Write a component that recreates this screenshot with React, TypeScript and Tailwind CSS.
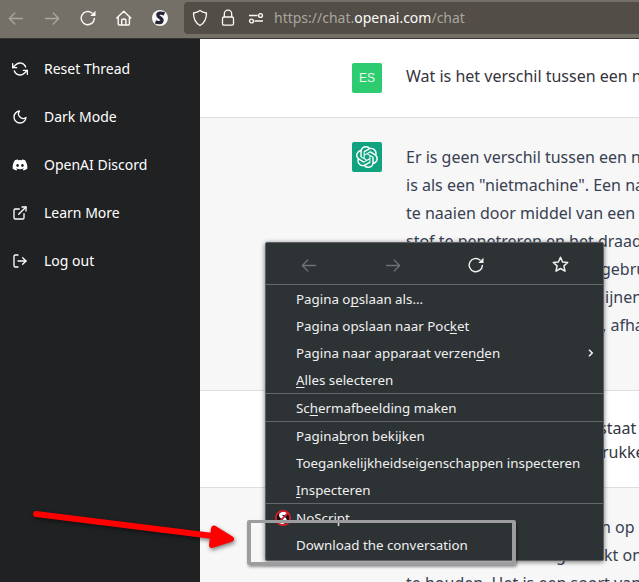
import React from "react";
import { FiRefreshCcw, FiMoon, FiExternalLink, FiLogOut } from "react-icons/fi";
import { FaDiscord } from "react-icons/fa";
import { SiOpenai } from "react-icons/si";

function Arrow({ back = false, className = "" }: { back?: boolean; className?: string }) {
  return (
    <svg width="16" height="16" viewBox="0 0 16 16" fill="none" stroke="currentColor" strokeWidth="1.3" strokeLinecap="round" strokeLinejoin="round" className={className}>
      <path d={back ? "M14.5 8.5H1.5M6.8 3L1.3 8.5L6.8 14" : "M1.5 8.5H14.5M9.2 3L14.7 8.5L9.2 14"} />
    </svg>
  );
}

function Reload() {
  return (
    <svg width="16" height="16" viewBox="0 0 16 16" fill="none" stroke="currentColor" strokeWidth="1.4" strokeLinecap="round">
      <path d="M14.4 8.4A6.6 6.6 0 1 1 12 3" />
      <path d="M15.5 0.7V6H10.2Z" fill="currentColor" stroke="none" />
    </svg>
  );
}

function Star() {
  return (
    <svg width="17" height="17" viewBox="0 0 17 17" fill="none" stroke="currentColor" strokeWidth="1.5" strokeLinejoin="round">
      <path d="M8.5 1.3L10.6 6L15.7 6.5L11.9 9.9L13 15.2L8.5 12.5L4 15.2L5.1 9.9L1.3 6.5L6.4 6Z" />
    </svg>
  );
}

function Toolbar() {
  return (
    <header className="flex h-[39px] shrink-0 items-start border-b border-[#38352f] bg-[#757067] text-[#fbfbfa]">
      <div className="flex h-9 w-[184px] shrink-0 items-center gap-5 pl-2">
        <Arrow back className="text-[#aaa69f]" />
        <Arrow className="text-[#aaa69f]" />
        <Reload />
        <svg width="16" height="16" viewBox="0 0 16 16" fill="none" stroke="currentColor" strokeWidth="1.4" strokeLinecap="round" strokeLinejoin="round">
          <path d="M0.8 8L7.8 1.3L14.8 8M2.2 7V14Q2.2 15 3.2 15H12.4Q13.4 15 13.4 14V7M5.7 15V10.5Q5.7 9 7.8 9Q9.9 9 9.9 10.5V15" />
        </svg>
        <svg width="16" height="16" viewBox="0 0 16 16">
          <circle cx="8" cy="8" r="8" fill="#f8f8f8" />
          <path d="M12.4 3.9C9 2.5 6 3 5.8 5C5.6 7.4 10.4 7.8 10 10.4C9.6 13 6.3 13 3.4 11.9" fill="none" stroke="#27233b" strokeWidth="3.4" />
        </svg>
      </div>
      <div className="mt-[2px] flex h-8 flex-1 items-center rounded-l-[4px] bg-[#524d46] pl-2">
        <svg width="16" height="18" viewBox="0 0 16 18" fill="none" stroke="currentColor" strokeWidth="1.3" strokeLinejoin="round">
          <path d="M8 1.5C10 3.2 12.3 3.8 14.5 4C14.5 9.7 12.6 14 8 16.5C3.4 14 1.5 9.7 1.5 4C3.7 3.8 6 3.2 8 1.5Z" />
        </svg>
        <svg className="ml-3" width="16" height="18" viewBox="0 0 16 18" fill="none" stroke="currentColor" strokeWidth="1.3">
          <path d="M4.3 8V4.8A3.7 3.7 0 0 1 11.7 4.8V8" />
          <rect x="2.5" y="8" width="11" height="8.2" rx="1.4" />
        </svg>
        <svg className="ml-3" width="16" height="16" viewBox="0 0 16 16" fill="none" stroke="currentColor" strokeWidth="1.4">
          <path d="M1 5.5H9.5M6.5 11H15" />
          <circle cx="12.5" cy="5.5" r="1.9" />
          <circle cx="3.5" cy="11" r="1.9" />
        </svg>
        <span className="ml-[10px] text-[14px] leading-5 whitespace-nowrap text-[#aaa69f]">
          https://chat.<span className="text-[#fbfbfa]">openai.com</span>/chat
        </span>
      </div>
    </header>
  );
}

const links = [
  { label: "Reset Thread", Icon: FiRefreshCcw },
  { label: "Dark Mode", Icon: FiMoon },
  { label: "OpenAI Discord", Icon: FaDiscord },
  { label: "Learn More", Icon: FiExternalLink },
  { label: "Log out", Icon: FiLogOut },
];

function Sidebar() {
  return (
    <nav className="flex w-[200px] shrink-0 flex-col bg-[#202123] pt-[6px] text-sm text-white">
      {links.map(({ label, Icon }) => (
        <a key={label} className="flex h-12 items-center gap-4 pl-3">
          <Icon size={16} />
          {label}
        </a>
      ))}
    </nav>
  );
}

function Chat() {
  return (
    <main className="flex min-w-0 flex-1 flex-col overflow-hidden bg-[#f7f7f8] text-base text-[#374151]">
      <section className="flex h-[79px] shrink-0 gap-6 border-b border-[#dedee1] bg-white pt-6 pl-[152px] text-[#343541]">
        <div className="flex size-[30px] shrink-0 items-center justify-center rounded-xs bg-[#2dcc70] font-['Liberation_Sans',sans-serif] text-[12px] text-white/90">ES</div>
        <p className="leading-[26px] whitespace-nowrap">Wat is het verschil tussen een n</p>
      </section>
      <section className="flex h-[273px] shrink-0 border-b border-[#dedee1] pt-6 pl-[152px]">
        <div className="flex size-[30px] shrink-0 items-center justify-center rounded-xs bg-[#10a37f] text-white">
          <SiOpenai size={22} />
        </div>
        <div className="w-0 pt-px leading-7 whitespace-nowrap">
          <p className="pl-6">Er is geen verschil tussen een n</p>
          <p className="pl-6">is als een "nietmachine". Een na</p>
          <p className="pl-6">te naaien door middel van een</p>
          <p className="pl-6">stof te penetreren en het draad</p>
          <p className="pl-[219px]">gebru</p>
          <p className="pl-[223px]">ijnen</p>
          <p className="pl-[220px]">, afha</p>
        </div>
      </section>
      <section className="h-[97px] shrink-0 border-b border-[#dedee1] bg-white pt-[25px] pl-[399px] leading-6 text-[#343541]">
        <p className="whitespace-nowrap">staat</p>
        <p className="pl-[3px] whitespace-nowrap">rukke</p>
      </section>
      <section className="pt-[25px] pl-[206px] leading-7">
        <p className="pl-[195px] whitespace-nowrap">n op</p>
        <p className="flex whitespace-nowrap">
          <span className="w-[198px] shrink-0 pl-[150px]">g</span>kt on
        </p>
        <p className="whitespace-nowrap">te houden. Het is een soort van</p>
      </section>
    </main>
  );
}

const groups: { before: string; key?: string; after?: string; arrow?: boolean; logo?: boolean }[][] = [
  [
    { before: "Pagina o", key: "p", after: "slaan als..." },
    { before: "Pagina opslaan naar Poc", key: "k", after: "et" },
    { before: "Pagina naar apparaat verzen", key: "d", after: "en", arrow: true },
    { before: "", key: "A", after: "lles selecteren" },
  ],
  [{ before: "Sc", key: "h", after: "ermafbeelding maken" }],
  [
    { before: "Pagina", key: "b", after: "ron bekijken" },
    { before: "Toegankelijkheidseigenschappen inspecteren" },
    { before: "", key: "I", after: "nspecteren" },
  ],
  [{ before: "NoScript", logo: true }, { before: "Download the conversation" }],
];

function NoScriptIcon() {
  return (
    <svg width="16" height="16" viewBox="0 0 16 16">
      <circle cx="8" cy="8" r="7" fill="#111" />
      <path d="M12 4.3C8.6 2.6 5.4 3.4 5.6 5.6C5.8 7.8 10.2 7.7 10.2 10C10.2 12.4 7 12.9 4 11.5" fill="none" stroke="white" strokeWidth="3.2" />
      <circle cx="8" cy="8" r="7.1" fill="none" stroke="#db1f2c" strokeWidth="1.8" />
      <path d="M12.8 3.2L3.2 12.8" stroke="#db1f2c" strokeWidth="1.8" />
    </svg>
  );
}

function ContextMenu() {
  return (
    <div className="absolute top-[242px] left-[265px] h-[319px] w-[339px] rounded-[2px] border border-[#5d6165] bg-[#2d3235] text-[13.33px] text-[#f0f0f0] shadow-[0_1px_5px_rgba(0,0,0,0.55)]">
      <div className="flex h-[41px] items-center justify-around pt-[2px] pl-px">
        <Arrow back className="text-[#6e7175]" />
        <Arrow className="text-[#6e7175]" />
        <Reload />
        <Star />
      </div>
      {groups.map((items, i) => (
        <div key={i} className="border-t border-[#65686b]">
          {items.map((item) => (
            <div key={item.before + item.after} className="flex h-[27px] items-center whitespace-nowrap">
              <span className="w-[30px] shrink-0 pl-[9px]">{item.logo && <NoScriptIcon />}</span>
              <span className="flex-1 pt-[2px] whitespace-pre">
                {item.before}
                <span className="underline decoration-1 underline-offset-2 [text-decoration-skip-ink:none]">{item.key}</span>
                {item.after}
              </span>
              {item.arrow && (
                <svg className="mr-[8px]" width="8" height="8" viewBox="0 0 8 8" fill="none" stroke="currentColor" strokeWidth="1.6">
                  <path d="M2 0.8L5.2 4L2 7.2" />
                </svg>
              )}
            </div>
          ))}
        </div>
      ))}
    </div>
  );
}

function Annotations() {
  return (
    <>
      <div className="absolute top-[520px] left-[247px] h-[45px] w-[269px] rounded-[2px] border-x-[4px] border-y-[3px] border-[#9d9da0] shadow-[1px_2px_3px_rgba(0,0,0,0.4)]" />
      <svg className="absolute top-[500px] left-[20px] drop-shadow-[1px_2px_2px_rgba(0,0,0,0.5)]" width="230" height="70" viewBox="0 0 230 70" fill="red" stroke="red" strokeLinecap="round" strokeLinejoin="round">
        <path d="M16 14L193 36" strokeWidth="6" />
        <path d="M194 28.5L211 39L192 45Z" strokeWidth="6" />
      </svg>
    </>
  );
}

export default function App() {
  return (
    <div className="relative flex h-[582px] w-[639px] flex-col overflow-hidden font-['Noto_Sans',sans-serif]">
      <Toolbar />
      <div className="flex min-h-0 flex-1">
        <Sidebar />
        <Chat />
      </div>
      <ContextMenu />
      <Annotations />
    </div>
  );
}
